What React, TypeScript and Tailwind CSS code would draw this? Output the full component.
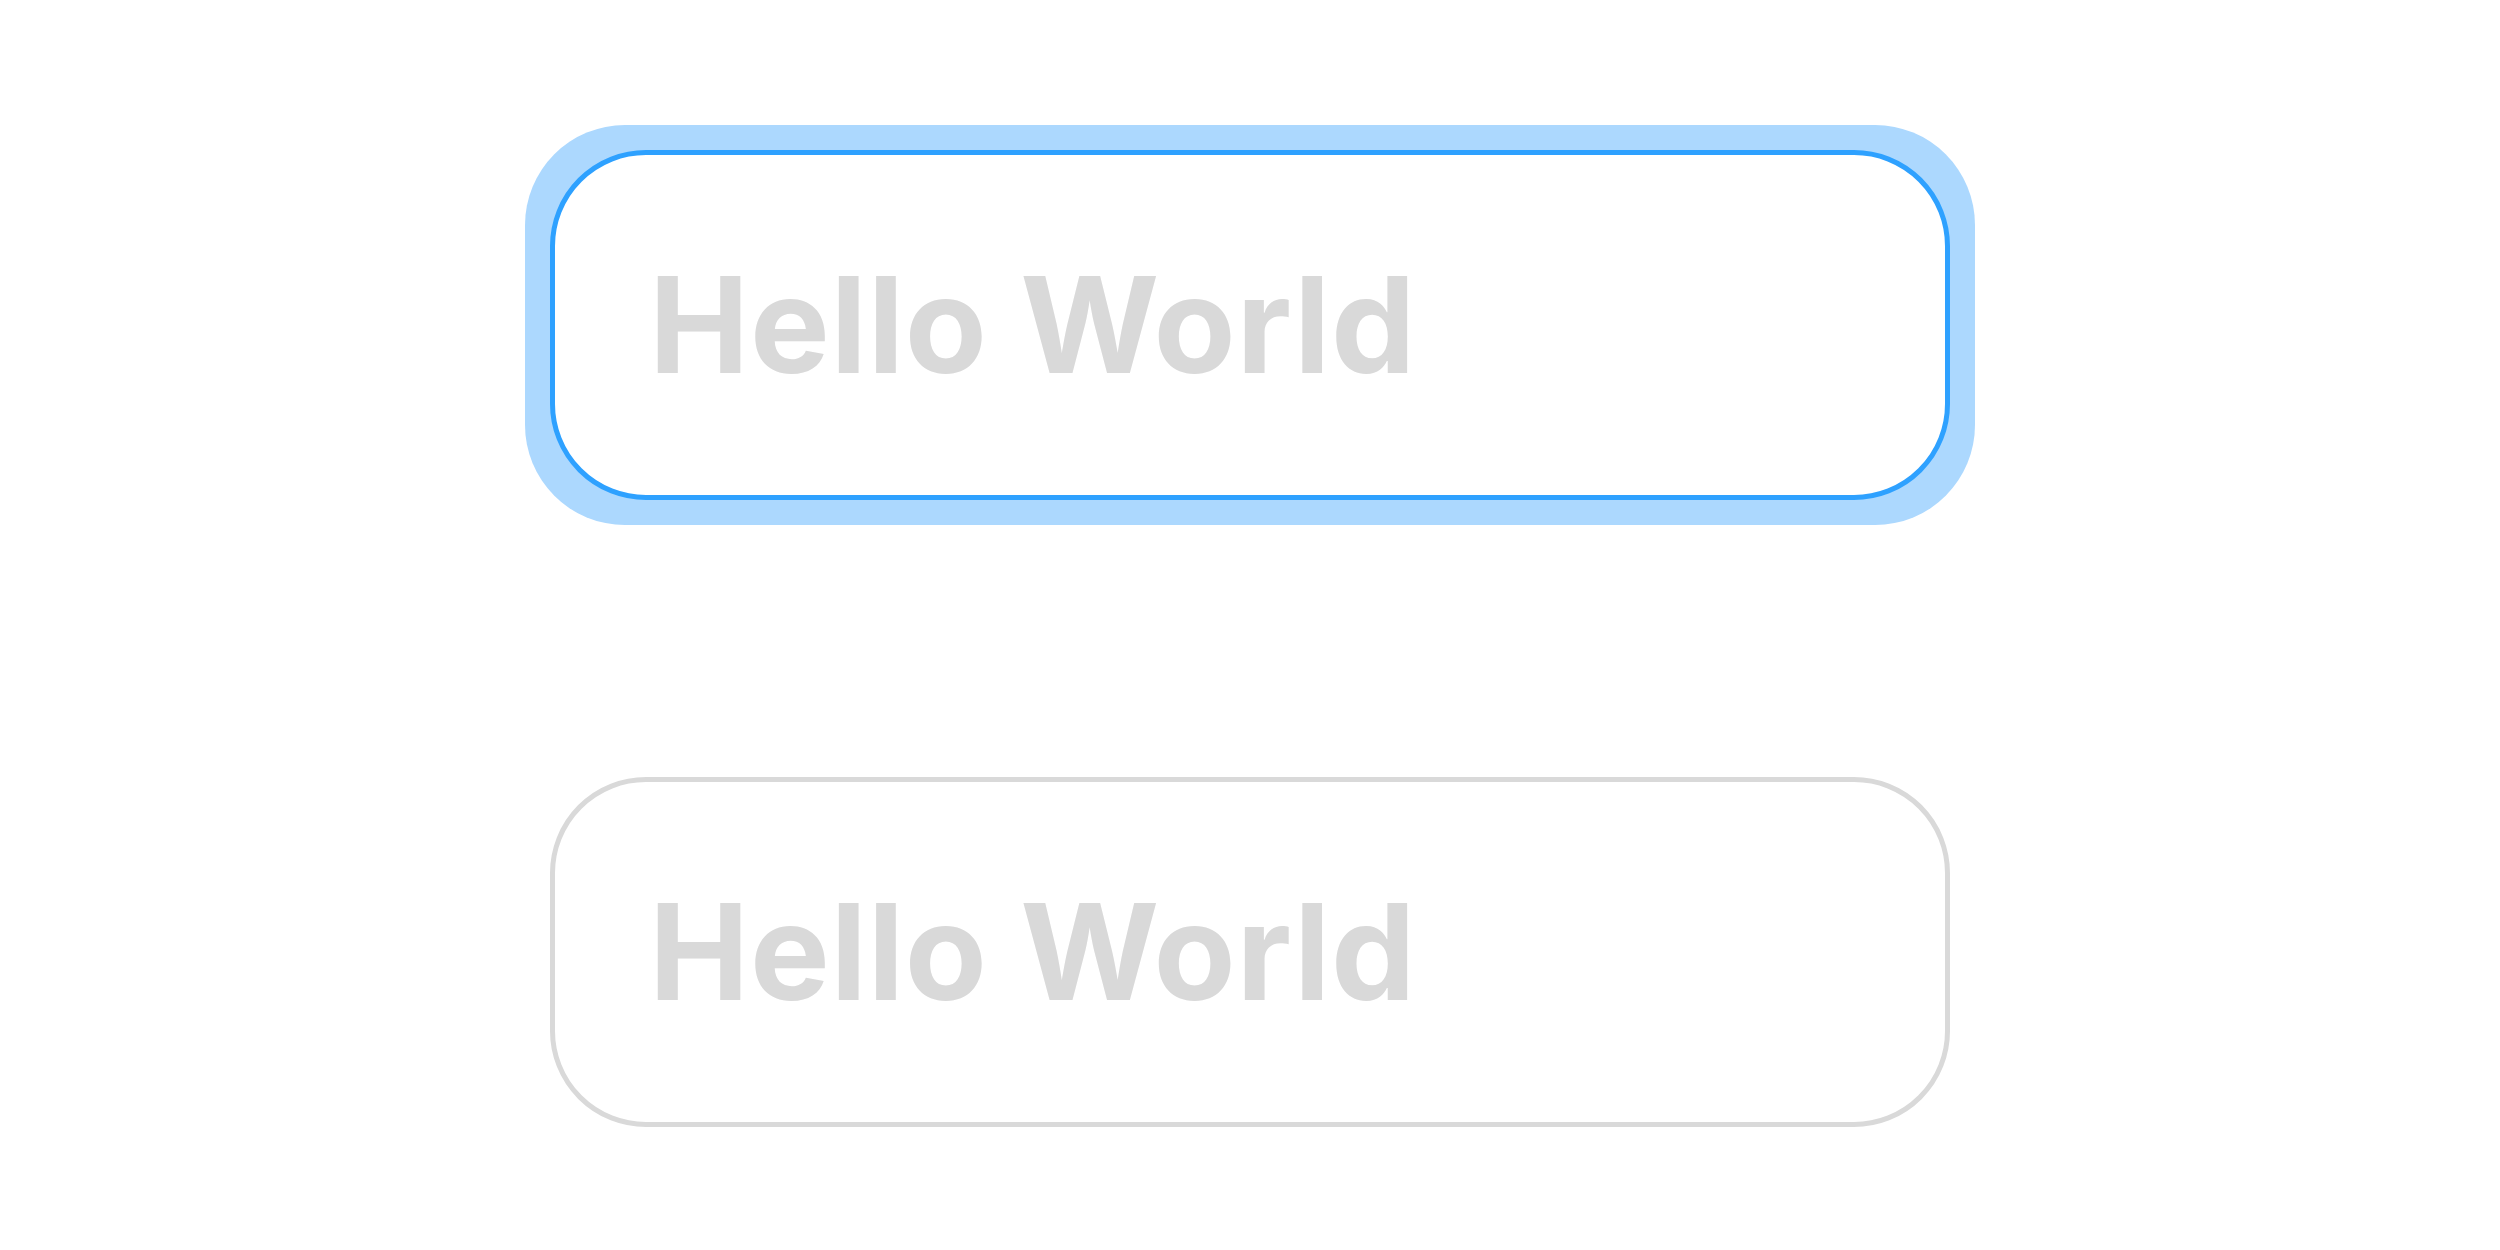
import React from "react";

function Field({ active }: { active?: boolean }) {
  return (
    <div
      className={
        "flex h-[350px] w-[1400px] items-center rounded-[96px] border-[5px] bg-white pb-[2px] pl-[94px] " +
        (active ? "border-[#2ea1ff]" : "border-[#d9d9d9]")
      }
    >
      <span className="font-['Inter',sans-serif] text-[134px] font-bold leading-none tracking-[0.006em] text-[#d9d9d9]">
        Hello World
      </span>
    </div>
  );
}

export default function App() {
  return (
    <div className="flex h-[1250px] w-[2500px] flex-col items-center bg-white">
      <div className="mt-[125px] rounded-[100px] bg-[#acd8fe] p-[25px]">
        <Field active />
      </div>
      <div className="mt-[252px]">
        <Field />
      </div>
    </div>
  );
}
